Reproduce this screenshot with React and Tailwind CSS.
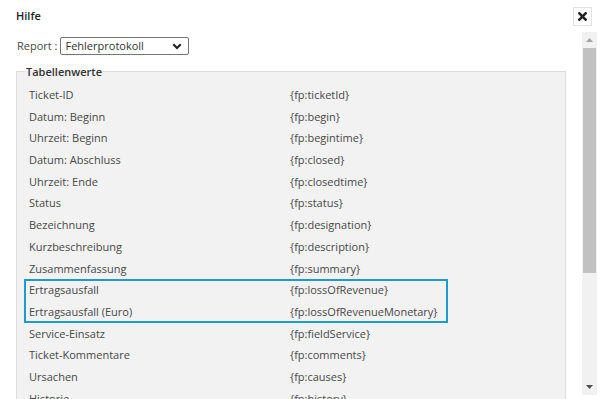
import React from 'react';

const rows = [
  ['Ticket-ID', '{fp:ticketId}'],
  ['Datum: Beginn', '{fp:begin}'],
  ['Uhrzeit: Beginn', '{fp:begintime}'],
  ['Datum: Abschluss', '{fp:closed}'],
  ['Uhrzeit: Ende', '{fp:closedtime}'],
  ['Status', '{fp:status}'],
  ['Bezeichnung', '{fp:designation}'],
  ['Kurzbeschreibung', '{fp:description}'],
  ['Zusammenfassung', '{fp:summary}'],
  ['Ertragsausfall', '{fp:lossOfRevenue}'],
  ['Ertragsausfall (Euro)', '{fp:lossOfRevenueMonetary}'],
  ['Service-Einsatz', '{fp:fieldService}'],
  ['Ticket-Kommentare', '{fp:comments}'],
  ['Ursachen', '{fp:causes}'],
  ['Historie', '{fp:history}'],
  ['Anlage', '{fp:plant}'],
  ['Komponente', '{fp:component}'],
];

const Row = ({ label, value }) => (
  <div className="flex h-[21.7px] leading-[21.7px] whitespace-nowrap">
    <span className="w-[266px] pl-[5px]">{label}</span>
    <span>{value}</span>
  </div>
);

export default function App() {
  const before = rows.slice(0, 9);
  const marked = rows.slice(9, 11);
  const after = rows.slice(11);

  return (
    <div
      className="w-[600px] h-[399px] bg-white overflow-hidden text-[11px] text-[#484848]"
      style={{ fontFamily: '"Open Sans", "Liberation Sans", sans-serif' }}
    >
      {/* Kopfzeile */}
      <div className="h-8 flex items-center justify-between pl-4 pr-2">
        <span className="font-semibold text-[#222]">Hilfe</span>
        <button className="w-[19px] h-[19px] mt-px flex items-center justify-center border border-[#e2e2e2] bg-white">
          <svg width="9" height="9" viewBox="0 0 9 9">
            <path d="M1.4 1.4 L7.6 7.6 M7.6 1.4 L1.4 7.6" stroke="#222" strokeWidth="2.6" strokeLinecap="square" />
          </svg>
        </button>
      </div>

      <div className="flex h-[367px] items-start">
        {/* Inhalt */}
        <div className="flex-1 h-[367px] overflow-hidden">
          <div className="flex items-center h-[18px] mt-[5px] pl-[17px]">
            <span>Report :</span>
            <div className="ml-[3px] w-[129px] h-[18px] border border-[#767676] rounded-[2px] flex items-center justify-between pl-[4px] pr-[6px] text-[#333]">
              <span>Fehlerprotokoll</span>
              <svg width="10" height="7" viewBox="0 0 10 7">
                <path d="M1.3 1.3 L5 5 L8.7 1.3" fill="none" stroke="#222" strokeWidth="2.2" />
              </svg>
            </div>
          </div>

          <fieldset className="mx-4 mt-[9px] border border-[#dcdcdc] bg-[#f2f2f2]">
            <legend className="ml-[8px] px-px font-semibold text-[#333] leading-[15px]">Tabellenwerte</legend>
            <div className="ml-[7px] mt-[5px] w-[424px]">
              {before.map(([l, v]) => (
                <Row key={l} label={l} value={v} />
              ))}
              <div className="shadow-[inset_0_0_0_2px_#1c9ccd]">
                {marked.map(([l, v]) => (
                  <Row key={l} label={l} value={v} />
                ))}
              </div>
              {after.map(([l, v]) => (
                <Row key={l} label={l} value={v} />
              ))}
            </div>
          </fieldset>
        </div>

        {/* Scrollleiste */}
        <div className="w-[15px] h-[363px] mr-[3px] bg-[#f1f1f1] flex flex-col items-center">
          <div className="h-4 flex items-center justify-center">
            <svg width="7" height="4" viewBox="0 0 7 4">
              <path d="M0 4 L3.5 0 L7 4 Z" fill="#a3a3a3" />
            </svg>
          </div>
          <div className="w-[13px] h-[225px] bg-[#c1c1c1]" />
          <div className="flex-1" />
          <div className="h-4 flex items-center justify-center">
            <svg width="7" height="4" viewBox="0 0 7 4">
              <path d="M0 0 L3.5 4 L7 0 Z" fill="#505050" />
            </svg>
          </div>
        </div>
      </div>
    </div>
  );
}
